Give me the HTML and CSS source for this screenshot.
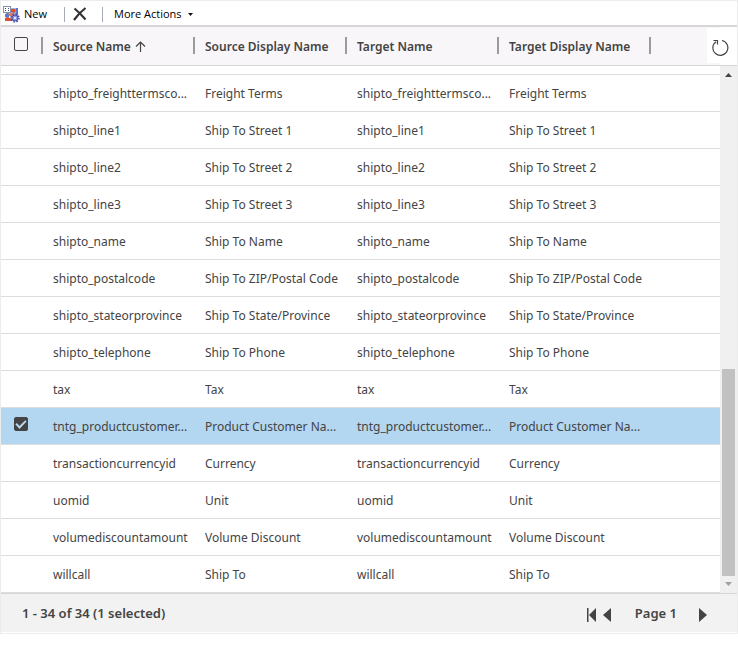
FILE: index.html
```html
<!DOCTYPE html>
<html lang="en">
<head>
<meta charset="utf-8">
<title>Field Mappings</title>
<link rel="stylesheet" href="styles.css">
</head>
<body>
<main class="panel">
  <div class="toolbar" role="toolbar" aria-label="Mapping actions">
    <button class="tool tool-new" type="button">
      <svg width="17" height="17" viewBox="0 0 17 17" aria-hidden="true">
        <rect x="3" y="2" width="12" height="13" rx="1" fill="#9db4ea"/>
        <path d="M13 2h2v7h-2z" fill="#5578cc"/>
        <path d="M8 3h4l1 2-2 2-3-1z" fill="#d9502e"/>
        <path d="M2 8l3-1 3 2-2 2H2z" fill="#5b7bd0"/>
        <path d="M5 8l3-1 4 1-2 2-3 1z" fill="#e8785a"/>
        <path d="M2 12l3-1 4 2-1 2H2z" fill="#e0502a"/>
        <path d="M6 10l3 0-1 2-2 0z" fill="#fff"/>
        <rect x=".5" y=".5" width="7" height="6" fill="#fff" stroke="#8493ab"/>
        <path d="M2 2h1v1H2zM5 2h1v1H5zM2 4h1v1H2zM5 4h1v1H5z" fill="#3c4f78"/>
        <circle cx="12" cy="12" r="3" fill="#8f97e6" stroke="#4a50a8"/>
        <circle cx="12" cy="12" r="4" fill="none" stroke="#4a50a8" stroke-width="1.5" stroke-dasharray="1.6 1.54"/>
        <circle cx="12" cy="12" r="1" fill="#fff"/>
      </svg>
      <span>New</span>
    </button>
    <span class="divider"></span>
    <button class="tool tool-delete" type="button" aria-label="Delete">
      <svg width="14" height="14" viewBox="0 0 14 14" aria-hidden="true"><path d="M1.5 1.5Q7 6 12.5 12.500M12.500 1Q6 6 1 13" fill="none" stroke="#333" stroke-width="2.200"/></svg>
    </button>
    <span class="divider"></span>
    <button class="tool tool-more" type="button">
      <span>More Actions</span>
      <svg width="5" height="3" viewBox="0 0 5 3" aria-hidden="true"><path d="M0 0h5L2.500 3z" fill="#111"/></svg>
    </button>
  </div>

  <div class="grid">
    <table class="list">
      <colgroup><col class="col-check"><col class="col-data"><col class="col-data"><col class="col-data"><col class="col-data"><col></colgroup>
      <thead>
        <tr>
          <th><div class="head head-check"><input type="checkbox" aria-label="Select all"></div></th>
          <th><div class="head">Source Name <svg width="11" height="11" viewBox="0 0 11 11" aria-hidden="true"><path d="M5.500 11V1M1 5.500L5.500 1 10 5.500" fill="none" stroke="#444" stroke-width="1.200"/></svg></div></th>
          <th><div class="head">Source Display Name</div></th>
          <th><div class="head">Target Name</div></th>
          <th><div class="head">Target Display Name</div></th>
          <th></th>
        </tr>
      </thead>
      <tbody>
        <tr class="clipped"><td colspan="6"></td></tr>
        <tr><td></td><td>shipto_freighttermsco...</td><td>Freight Terms</td><td>shipto_freighttermsco...</td><td>Freight Terms</td><td></td></tr>
        <tr><td></td><td>shipto_line1</td><td>Ship To Street 1</td><td>shipto_line1</td><td>Ship To Street 1</td><td></td></tr>
        <tr><td></td><td>shipto_line2</td><td>Ship To Street 2</td><td>shipto_line2</td><td>Ship To Street 2</td><td></td></tr>
        <tr><td></td><td>shipto_line3</td><td>Ship To Street 3</td><td>shipto_line3</td><td>Ship To Street 3</td><td></td></tr>
        <tr><td></td><td>shipto_name</td><td>Ship To Name</td><td>shipto_name</td><td>Ship To Name</td><td></td></tr>
        <tr><td></td><td>shipto_postalcode</td><td>Ship To ZIP/Postal Code</td><td>shipto_postalcode</td><td>Ship To ZIP/Postal Code</td><td></td></tr>
        <tr><td></td><td>shipto_stateorprovince</td><td>Ship To State/Province</td><td>shipto_stateorprovince</td><td>Ship To State/Province</td><td></td></tr>
        <tr><td></td><td>shipto_telephone</td><td>Ship To Phone</td><td>shipto_telephone</td><td>Ship To Phone</td><td></td></tr>
        <tr><td></td><td>tax</td><td>Tax</td><td>tax</td><td>Tax</td><td></td></tr>
        <tr class="selected"><td class="check"><input type="checkbox" checked aria-label="Select tntg_productcustomer"></td><td>tntg_productcustomer...</td><td>Product Customer Na...</td><td>tntg_productcustomer...</td><td>Product Customer Na...</td><td></td></tr>
        <tr><td></td><td>transactioncurrencyid</td><td>Currency</td><td>transactioncurrencyid</td><td>Currency</td><td></td></tr>
        <tr><td></td><td>uomid</td><td>Unit</td><td>uomid</td><td>Unit</td><td></td></tr>
        <tr><td></td><td>volumediscountamount</td><td>Volume Discount</td><td>volumediscountamount</td><td>Volume Discount</td><td></td></tr>
        <tr><td></td><td>willcall</td><td>Ship To</td><td>willcall</td><td>Ship To</td><td></td></tr>
      </tbody>
    </table>
    <div class="side">
      <div class="side-head"></div>
      <div class="scrollbar" aria-hidden="true">
        <svg width="7" height="4" viewBox="0 0 7 4"><path d="M0 4L3.500 0 7 4z" fill="#444"/></svg>
        <div class="track"><div class="thumb"></div></div>
        <svg width="7" height="4" viewBox="0 0 7 4"><path d="M0 0h7L3.500 4z" fill="#a0a0a0"/></svg>
      </div>
    </div>
    <button class="refresh" type="button" aria-label="Refresh">
      <svg width="18" height="18" viewBox="0 0 18 18" aria-hidden="true"><path d="M11 1.500A7.500 7.500 0 1 1 5 2.700M2.500 1.500H6.500V5.500" fill="none" stroke="#444" stroke-width="1.200"/></svg>
    </button>
  </div>

  <footer class="footer">
    <span>1 - 34 of 34 (1 selected)</span>
    <nav class="pager" aria-label="Pages">
      <button type="button" aria-label="First page"><svg width="10" height="14" viewBox="0 0 10 14" aria-hidden="true"><path d="M0 0h1.500v14H0zM9 0v14L2 7z" fill="#444"/></svg></button>
      <button type="button" aria-label="Previous page"><svg width="8" height="14" viewBox="0 0 8 14" aria-hidden="true"><path d="M8 0v14L0 7z" fill="#444"/></svg></button>
      <span class="page">Page 1</span>
      <button type="button" aria-label="Next page"><svg width="8" height="14" viewBox="0 0 8 14" aria-hidden="true"><path d="M0 0v14l8-7z" fill="#444"/></svg></button>
    </nav>
  </footer>
</main>
</body>
</html>
```
FILE: styles.css
```css
* {
  box-sizing: border-box;
}

body {
  margin: 0;
  background: #fff;
  color: #444;
  font: 12px/18px "Noto Sans", "Open Sans", sans-serif;
}

button {
  margin: 0;
  padding: 0;
  border: 0;
  background: none;
  color: inherit;
  font: inherit;
}

svg {
  display: block;
}

.panel {
  border: 1px solid #ececec;
}

.toolbar {
  display: flex;
  align-items: center;
  height: 26px;
  border-bottom: 2px solid #d6d6d6;
  color: #000;
  font-family: "Open Sans", "Noto Sans", sans-serif;
  font-size: 11px;
}

.tool {
  display: flex;
  align-items: center;
  height: 100%;
  padding-top: 2px;
}

.tool-new {
  gap: 4px;
  width: 63px;
  padding-left: 2px;
}

.tool-delete {
  width: 37px;
  padding-left: 8px;
}

.tool-more {
  gap: 6px;
  padding-left: 11px;
}

.divider {
  width: 1px;
  height: 15px;
  margin-top: 2px;
  background: #a5acb5;
}

.grid {
  position: relative;
  display: flex;
}

.list {
  flex: 1;
  width: 100%;
  min-width: 0;
  border-collapse: separate;
  border-spacing: 0;
  table-layout: fixed;
}

.col-check {
  width: 42px;
}

.col-data {
  width: 152px;
}

th,
td {
  height: 37px;
  padding: 2px 0 0 10px;
  border-bottom: 1px solid #ddd;
  text-align: left;
  white-space: nowrap;
}

th {
  height: 39px;
  padding: 0 0 2px 10px;
  border-color: #d6d6d6;
  background: #f8f6f9;
  font-weight: 600;
}

.head {
  display: flex;
  align-items: center;
  gap: 4px;
  height: 17px;
  padding-top: 3px;
  border-right: 2px solid #9c9a9d;
}

.head-check {
  align-items: flex-start;
  padding: 0 0 0 3px;
}

.clipped td {
  height: 9px;
}

.selected td {
  background: #b3d6f1;
}

.selected .check {
  padding: 0 0 4px 13px;
}

input[type="checkbox"] {
  display: block;
  appearance: none;
  width: 14px;
  height: 14px;
  margin: 0;
  border: 1px solid #444;
  border-radius: 2px;
  background: #fff;
}

.head-check input {
  background: none;
}

input[type="checkbox"]:checked {
  display: grid;
  place-items: center;
  background: #444;
}

input[type="checkbox"]:checked::after {
  content: "";
  width: 8px;
  height: 4px;
  margin-bottom: 2px;
  border: solid #b3d6f1;
  border-width: 0 0 2px 2px;
  transform: rotate(-45deg);
}

.side {
  display: flex;
  flex: none;
  flex-direction: column;
  width: 17px;
}

.side-head {
  height: 39px;
  border-bottom: 1px solid #d6d6d6;
}

.scrollbar {
  display: flex;
  flex: 1;
  flex-direction: column;
  align-items: center;
  padding: 7px 0;
  background: #f0f0f0;
}

.track {
  display: flex;
  flex: 1;
  align-items: flex-end;
  padding: 6px 0;
}

.thumb {
  width: 13px;
  height: 42%;
  background: #c1c1c1;
}

.refresh {
  position: absolute;
  top: 1px;
  right: 0;
  display: flex;
  align-items: center;
  justify-content: center;
  width: 30px;
  height: 35px;
  padding: 5px 4px 0 0;
  background: #fff;
}

.footer {
  display: flex;
  align-items: center;
  justify-content: space-between;
  height: 40px;
  padding: 0 30px 0 21px;
  border-top: 1px solid #d6d6d6;
  border-bottom: 1px solid #fff;
  background: #f2f2f2;
  font-size: 13px;
  font-weight: 600;
}

.pager {
  display: flex;
  align-items: center;
  gap: 6px;
}

.pager button {
  padding-top: 3px;
}

.page {
  padding: 0 16px 0 18px;
}
```
